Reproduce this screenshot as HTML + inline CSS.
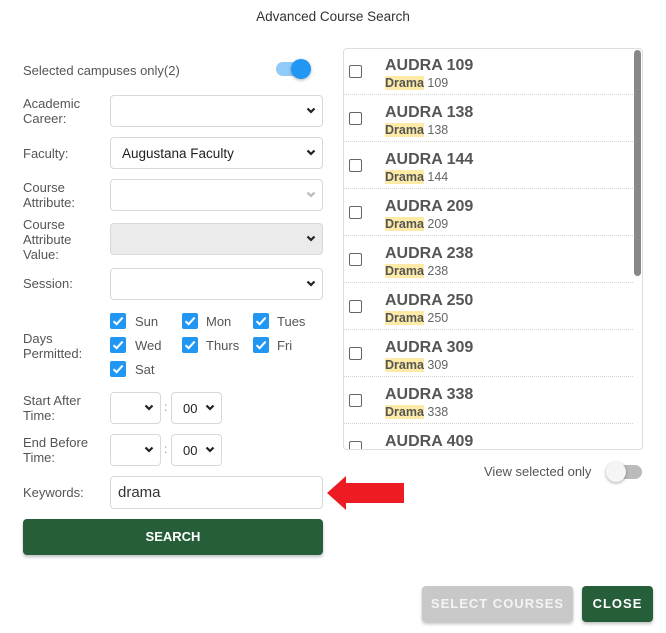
<!DOCTYPE html>
<html><head><style>
*{box-sizing:border-box;margin:0;padding:0}
body{width:666px;height:633px;background:#fff;font-family:"Liberation Sans",Roboto,sans-serif;color:#555;position:relative;overflow:hidden}
.a{position:absolute}
.lbl{position:absolute;left:23px;font-size:13px;line-height:15px;color:#555}
.sel{position:absolute;border:1px solid #d8d8d8;border-radius:4px;background:#fff;font-size:14px;color:#222}
.sel .ch{position:absolute;right:6px;top:50%;margin-top:-4px}
.day{position:absolute;font-size:13px;color:#555}
.row{position:absolute;left:343px;width:290px;height:47px;border-bottom:1px dotted #d4d4d4}
.row .box{position:absolute;left:6px;top:17px;width:13px;height:13px;border:1.5px solid #666;border-radius:2px}
.row .t{position:absolute;left:42px;top:9px;font-size:16px;font-weight:bold;color:#555}
.row .s{position:absolute;left:42px;top:28px;font-size:12.5px;color:#666}
.row .s b{background:#fdeaa6;color:#555}
.btn{position:absolute;border-radius:4px;color:#fff;font-weight:bold;font-size:13px;letter-spacing:1px;text-align:center;box-shadow:0 2px 3px rgba(0,0,0,.25)}
</style></head><body>
<div class="a" style="left:0;width:666px;top:9px;text-align:center;font-size:13.5px;color:#333">Advanced Course Search</div>

<div class="lbl" style="top:63px">Selected campuses only(2)</div>
<div class="a" style="left:276px;top:62px;width:32px;height:14px;border-radius:7px;background:#90caf9"></div>
<div class="a" style="left:291px;top:59px;width:20px;height:20px;border-radius:50%;background:#2196f3;box-shadow:0 1px 3px rgba(0,0,0,.3)"></div>

<svg width="0" height="0" style="position:absolute"><defs><symbol id="chv" viewBox="0 0 10 7"><path d="M1.5 1.5L5 5L8.5 1.5" fill="none" stroke="currentColor" stroke-width="2.2"/></symbol></defs></svg>

<div class="lbl" style="top:96px">Academic<br>Career:</div>
<div class="sel" style="left:110px;top:95px;width:213px;height:32px"><svg class="ch" width="10" height="7"><use href="#chv"/></svg></div>
<div class="lbl" style="top:146px">Faculty:</div>
<div class="sel" style="left:110px;top:137px;width:213px;height:32px"><span class="a" style="left:11px;top:8px;font-size:13.5px">Augustana Faculty</span><svg class="ch" width="10" height="7"><use href="#chv"/></svg></div>
<div class="lbl" style="top:180px">Course<br>Attribute:</div>
<div class="sel" style="left:110px;top:179px;width:213px;height:32px;color:#bbb"><svg class="ch" width="10" height="7"><use href="#chv"/></svg></div>
<div class="lbl" style="top:217px">Course<br>Attribute<br>Value:</div>
<div class="sel" style="left:110px;top:223px;width:213px;height:32px;background:#ebebeb"><svg class="ch" width="10" height="7"><use href="#chv"/></svg></div>
<div class="lbl" style="top:276px">Session:</div>
<div class="sel" style="left:110px;top:268px;width:213px;height:32px"><svg class="ch" width="10" height="7"><use href="#chv"/></svg></div>

<div class="lbl" style="top:331px">Days<br>Permitted:</div>
<svg width="0" height="0" style="position:absolute"><defs><symbol id="ck" viewBox="0 0 16 16"><rect width="16" height="16" rx="2" fill="#2196f3"/><path d="M3.5 8.2L6.6 11.2L12.6 4.6" fill="none" stroke="#fff" stroke-width="2"/></symbol></defs></svg>
<svg class="a" style="left:110px;top:313px" width="16" height="16"><use href="#ck"/></svg><div class="day" style="left:135px;top:314px">Sun</div>
<svg class="a" style="left:182px;top:313px" width="16" height="16"><use href="#ck"/></svg><div class="day" style="left:206px;top:314px">Mon</div>
<svg class="a" style="left:253px;top:313px" width="16" height="16"><use href="#ck"/></svg><div class="day" style="left:277px;top:314px">Tues</div>
<svg class="a" style="left:110px;top:337px" width="16" height="16"><use href="#ck"/></svg><div class="day" style="left:135px;top:338px">Wed</div>
<svg class="a" style="left:182px;top:337px" width="16" height="16"><use href="#ck"/></svg><div class="day" style="left:206px;top:338px">Thurs</div>
<svg class="a" style="left:253px;top:337px" width="16" height="16"><use href="#ck"/></svg><div class="day" style="left:277px;top:338px">Fri</div>
<svg class="a" style="left:110px;top:361px" width="16" height="16"><use href="#ck"/></svg><div class="day" style="left:135px;top:362px">Sat</div>

<div class="lbl" style="top:393px">Start After<br>Time:</div>
<div class="sel" style="left:110px;top:392px;width:51px;height:32px"><svg class="ch" width="10" height="7"><use href="#chv"/></svg></div>
<div class="a" style="left:164px;top:400px;font-size:12px;color:#999">:</div>
<div class="sel" style="left:171px;top:392px;width:51px;height:32px"><span class="a" style="left:11px;top:8px;font-size:13px">00</span><svg class="ch" width="10" height="7"><use href="#chv"/></svg></div>
<div class="lbl" style="top:435px">End Before<br>Time:</div>
<div class="sel" style="left:110px;top:434px;width:51px;height:32px"><svg class="ch" width="10" height="7"><use href="#chv"/></svg></div>
<div class="a" style="left:164px;top:442px;font-size:12px;color:#999">:</div>
<div class="sel" style="left:171px;top:434px;width:51px;height:32px"><span class="a" style="left:11px;top:8px;font-size:13px">00</span><svg class="ch" width="10" height="7"><use href="#chv"/></svg></div>

<div class="lbl" style="top:485px">Keywords:</div>
<div class="sel" style="left:110px;top:476px;width:213px;height:33px"><span class="a" style="left:7px;top:7px;font-size:15px;color:#333">drama</span></div>
<svg class="a" style="left:326px;top:474px" width="80" height="40"><polygon points="1,19 20,2 20,9 78,9 78,29 20,29 20,36" fill="#ed1c24"/></svg>

<div class="btn" style="left:23px;top:519px;width:300px;height:36px;line-height:36px;background:#275e3a;letter-spacing:0">SEARCH</div>

<div class="a" style="left:343px;top:48px;width:300px;height:402px;border:1px solid #ddd;border-radius:4px;overflow:hidden">
<div class="a" style="right:1px;top:1px;width:7px;height:226px;background:#888;border-radius:4px"></div>
</div>
<div class="row" style="top:48px"><div class="box"></div><div class="t">AUDRA 109</div><div class="s"><b>Drama</b> 109</div></div>
<div class="row" style="top:95px"><div class="box"></div><div class="t">AUDRA 138</div><div class="s"><b>Drama</b> 138</div></div>
<div class="row" style="top:142px"><div class="box"></div><div class="t">AUDRA 144</div><div class="s"><b>Drama</b> 144</div></div>
<div class="row" style="top:189px"><div class="box"></div><div class="t">AUDRA 209</div><div class="s"><b>Drama</b> 209</div></div>
<div class="row" style="top:236px"><div class="box"></div><div class="t">AUDRA 238</div><div class="s"><b>Drama</b> 238</div></div>
<div class="row" style="top:283px"><div class="box"></div><div class="t">AUDRA 250</div><div class="s"><b>Drama</b> 250</div></div>
<div class="row" style="top:330px"><div class="box"></div><div class="t">AUDRA 309</div><div class="s"><b>Drama</b> 309</div></div>
<div class="row" style="top:377px"><div class="box"></div><div class="t">AUDRA 338</div><div class="s"><b>Drama</b> 338</div></div>
<div class="a" style="left:343px;top:424px;width:290px;height:25px;overflow:hidden"><div class="row" style="left:0;top:0;border:none"><div class="box"></div><div class="t">AUDRA 409</div></div></div>

<div class="a" style="left:484px;top:464px;font-size:13px;color:#555">View selected only</div>
<div class="a" style="left:608px;top:465px;width:34px;height:14px;border-radius:7px;background:#bbb"></div>
<div class="a" style="left:606px;top:462px;width:20px;height:20px;border-radius:50%;background:#f5f5f5;box-shadow:0 1px 3px rgba(0,0,0,.35)"></div>

<div class="btn" style="left:422px;top:586px;width:151px;height:36px;line-height:36px;background:#c8c8c8;color:#f4f4f4">SELECT COURSES</div>
<div class="btn" style="left:582px;top:586px;width:71px;height:36px;line-height:36px;background:#275e3a">CLOSE</div>
</body></html>
